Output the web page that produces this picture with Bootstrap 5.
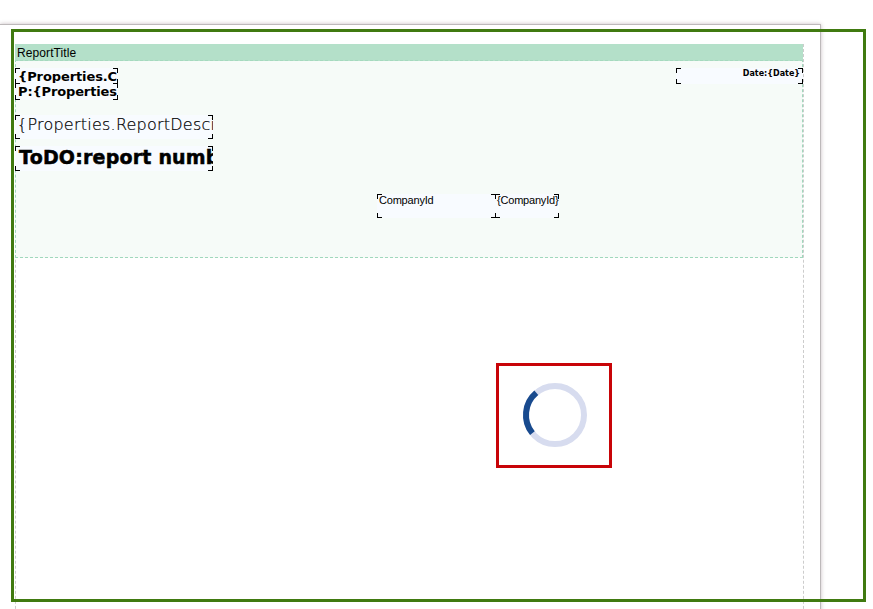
<!DOCTYPE html>
<html lang="en">
<head>
<meta charset="utf-8">
<meta name="viewport" content="width=device-width, initial-scale=1">
<title>Report designer</title>
<link href="https://cdn.jsdelivr.net/npm/bootstrap@5.3.0/dist/css/bootstrap.min.css" rel="stylesheet">
<style>
body{font-family:"DejaVu Sans",sans-serif;color:#000;background:#fff}
.designer{width:873px;height:609px;padding-top:24px}
.paper{width:821px;height:620px;border-top:1px solid #bdb9ba;border-right:1px solid #bdb9ba;box-shadow:0 0 4px rgba(70,40,50,.3);padding:19px 16px 0 15px}
.margins{height:100%;border:1px dashed #ccc;border-width:0 1px;border-color:#ccc}
.band{height:214px;margin:0 0 0 -1px;background:#f6fbf8;border:1px dashed #a0d8bc;border-top:0}
.band-title{height:17px;margin:0 -1px;background:#b4e0c9;border-bottom:1px dashed #a5d9be;font:12px/18px "Liberation Sans",sans-serif;padding-left:2px;letter-spacing:.1px}
/* Report components sit freely on the design canvas */
.field{position:absolute;overflow:hidden;white-space:nowrap;background-color:#f8fbff;--k:linear-gradient(#000,#000);
background-image:var(--k),var(--k),var(--k),var(--k),var(--k),var(--k),var(--k),var(--k);background-repeat:no-repeat;
background-position:0 0,0 0,100% 0,100% 0,0 100%,0 100%,100% 100%,100% 100%;
background-size:5px 1px,1px 5px,5px 1px,1px 5px,5px 1px,1px 5px,5px 1px,1px 5px}
.f-owner{left:15px;top:68px;width:103px;height:16px;font-size:13px;line-height:17px;padding-left:3px;letter-spacing:-.1px}
.f-phone{left:15px;top:83px;width:103px;height:17px;font-size:13px;line-height:17px;padding-left:3px;letter-spacing:-.14px}
.f-desc{left:15px;top:115px;width:198px;height:24px;font-size:16px;line-height:19px;padding-left:2px;font-weight:200;letter-spacing:.23px;-webkit-text-stroke:.2px #000}
.f-number{left:15px;top:146px;width:198px;height:25px;font-size:19px;line-height:22px;padding-left:4px;letter-spacing:.2px;-webkit-text-stroke:.5px #000}
.f-date{left:676px;top:68px;width:127px;height:16px;font-size:8px;line-height:11px;padding-right:3px;letter-spacing:0}
.f-label{left:377px;top:194px;width:119px;height:24px}
.f-company{left:495px;top:194px;width:64px;height:24px}
.f-label,.f-company{font:11px/13px "Liberation Sans",sans-serif;padding-left:2px;letter-spacing:-.2px}
.view-frame{left:11px;top:29px;width:855px;height:573px;border:3px solid #407a10}
.loader-frame{left:496px;top:363px;width:116px;height:105px;border:3px solid #c80408}
</style>
<script src="https://cdn.jsdelivr.net/npm/bootstrap@5.3.0/dist/js/bootstrap.bundle.min.js"></script>
</head>
<body>
<main class="designer position-relative overflow-hidden">
  <section class="paper bg-white">
    <div class="margins">
      <div class="band"><div class="band-title">ReportTitle</div></div>
    </div>
  </section>
  <div class="field f-owner fw-bold">{Properties.C</div>
  <div class="field f-phone fw-bold">P:{Properties</div>
  <div class="field f-desc">{Properties.ReportDesci</div>
  <div class="field f-number fw-bold">ToDO:report numb</div>
  <div class="field f-date fw-bold text-end">Date:{Date}</div>
  <div class="field f-label">CompanyId</div>
  <div class="field f-company">{CompanyId}</div>
  <div class="view-frame position-absolute"></div>
  <div class="loader-frame position-absolute">
    <svg class="d-block" width="110" height="99" viewBox="499 366 110 99" fill="none" stroke-width="6">
      <circle cx="555" cy="415" r="29" stroke="#d7dcef"/>
      <path d="M536.3 392.8A29 29 0 0 0 532.4 433.2" stroke="#184a8e"/>
    </svg>
  </div>
</main>
</body>
</html>
